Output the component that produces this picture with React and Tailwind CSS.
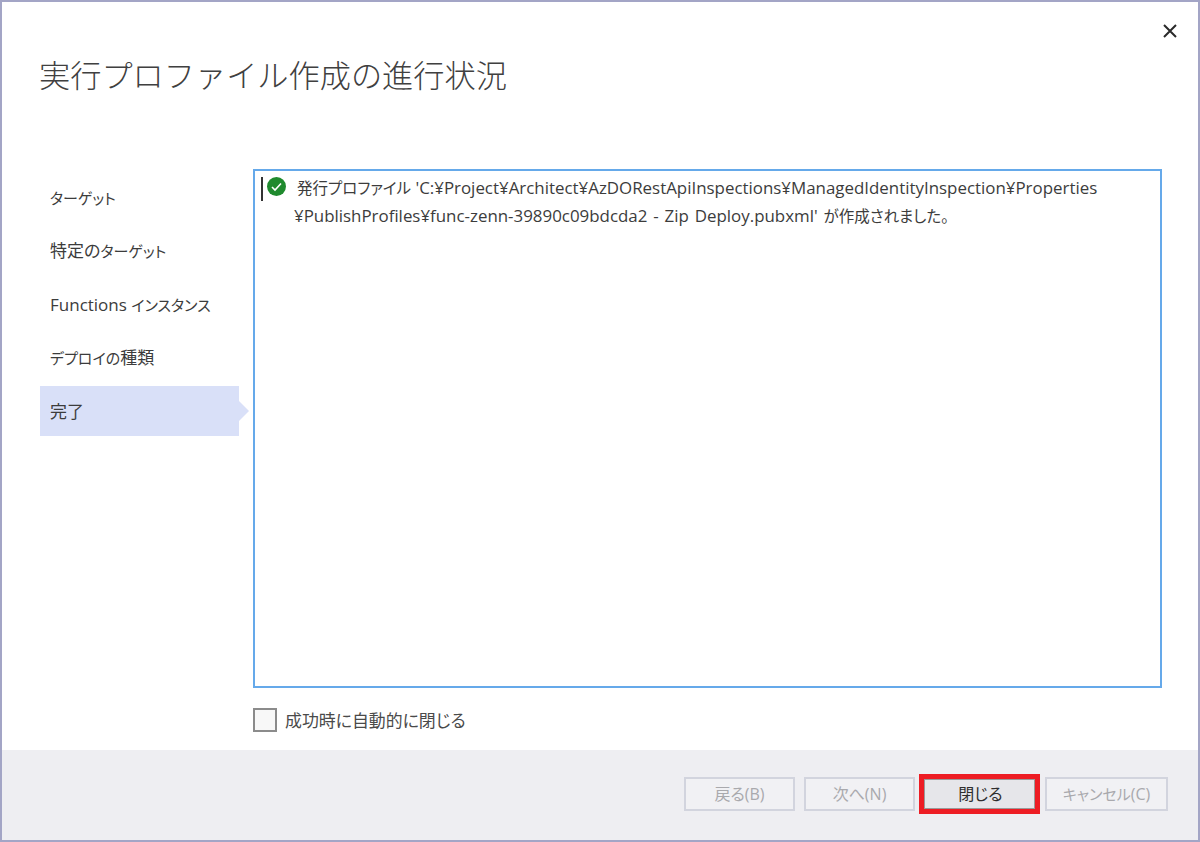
const FONT = "font-['Open_Sans','Noto_Sans_CJK_JP',sans-serif] [font-feature-settings:'palt']";

const Kana = ({ children }) => <span className="text-[15px]">{children}</span>;

const NAV_ITEMS = [
  <Kana>ターゲット</Kana>,
  <>特定の<Kana>ターゲット</Kana></>,
  <>Functions <Kana>インスタンス</Kana></>,
  <><Kana>デプロイの</Kana>種類</>,
  "完了",
];

const FooterButton = ({ children, width }) => (
  <button className={`${width} h-[34px] border-2 border-[#d2d4de] bg-[#f1f1f4] text-[16px] text-[#a9a9ad] flex items-center justify-center`}>
    <span>{children}</span>
  </button>
);

export default function App() {
  return (
    <div className={`${FONT} relative w-[1200px] h-[842px] flex flex-col bg-white border-2 border-[#a3a5c6] text-[#3c3c3c] overflow-hidden`}>
      <button className="absolute top-[19px] right-[18px] w-[20px] h-[20px] flex items-center justify-center">
        <svg width="14" height="14" viewBox="0 0 14 14">
          <path d="M1 1 L13 13 M13 1 L1 13" stroke="#2a2a2a" strokeWidth="2" fill="none" />
        </svg>
      </button>

      <h1 className="pl-[37px] pt-[50px] h-[167px] text-[31.2px] leading-[46px] font-light text-[#404040] [font-feature-settings:normal]">
        実行プロファイル作成の進行状況
      </h1>

      <div className="flex flex-1 min-h-0 pl-[38px] pr-[36px]">
        {/* Steps */}
        <div className="w-[213px] shrink-0 pt-[3px]">
          {NAV_ITEMS.map((item, i) => (
            <div
              key={i}
              className={`relative w-[199px] h-[50px] pl-[10px] pt-[1px] flex items-center whitespace-pre text-[17px] mb-[3.5px] ${
                i === 4 ? "bg-[#d9e0f8]" : ""
              }`}
            >
              <span>{item}</span>
              {i === 4 && (
                <div className="absolute left-full top-[15px] w-0 h-0 border-y-[10px] border-y-transparent border-l-[10px] border-l-[#d9e0f8]" />
              )}
            </div>
          ))}
        </div>

        {/* Log and checkbox */}
        <div className="flex-1 flex flex-col pb-[18px]">
          <div className="flex-1 border-2 border-[#65a9ea] pt-[6px] pl-[6px] flex items-start">
            <div className="w-[2px] h-[24px] bg-[#333333] shrink-0" />
            <svg className="ml-[4px] shrink-0" width="19" height="19" viewBox="0 0 19 19">
              <circle cx="9.5" cy="9.5" r="9.5" fill="#1f8a2e" />
              <path d="M5 10 L8 13 L14 6.5" stroke="#ffffff" strokeWidth="1.6" fill="none" />
            </svg>
            <div className="ml-[-24px] mt-[-3px] text-[16.9px] leading-[27px]">
              <div className="pl-[35px] whitespace-nowrap">
                <span className="text-[15.5px]">発行プロファイル</span> 'C:¥Project¥Architect¥AzDORestApiInspections¥ManagedIdentityInspection¥Properties
              </div>
              <div className="pl-[32px] whitespace-nowrap [word-spacing:1.5px]">
                ¥PublishProfiles¥func-zenn-39890c09bdcda2 - Zip Deploy.pubxml' <span className="text-[15.5px]">が作成されました。</span>
              </div>
            </div>
          </div>
          <label className="flex items-center mt-[20px] h-[24px]">
            <span className="w-[24px] h-[24px] border-2 border-[#8b8b8b] bg-[#f8f8f8] shrink-0" />
            <span className="ml-[8px] pt-[1px] text-[16.9px] text-[#4a4a4a]">成功時に自動的に閉じる</span>
          </label>
        </div>
      </div>

      <div className="h-[90px] shrink-0 bg-[#eeeef2] flex items-center justify-end gap-[9px] pr-[30px] pb-[3px]">
        <FooterButton width="w-[111px]">戻る(B)</FooterButton>
        <FooterButton width="w-[111px]">次へ(N)</FooterButton>
        <button className="w-[111px] h-[30px] mr-[1px] pl-[2px] bg-[#e6e6ea] border border-[#9a9a9a] outline-[5px] outline-solid outline-[#ed1c24] text-[16px] text-[#2e2e2e] flex items-center justify-center">
          閉じる
        </button>
        <FooterButton width="w-[123px]"><span className="text-[15px]">キャンセル</span>(C)</FooterButton>
      </div>
    </div>
  );
}
